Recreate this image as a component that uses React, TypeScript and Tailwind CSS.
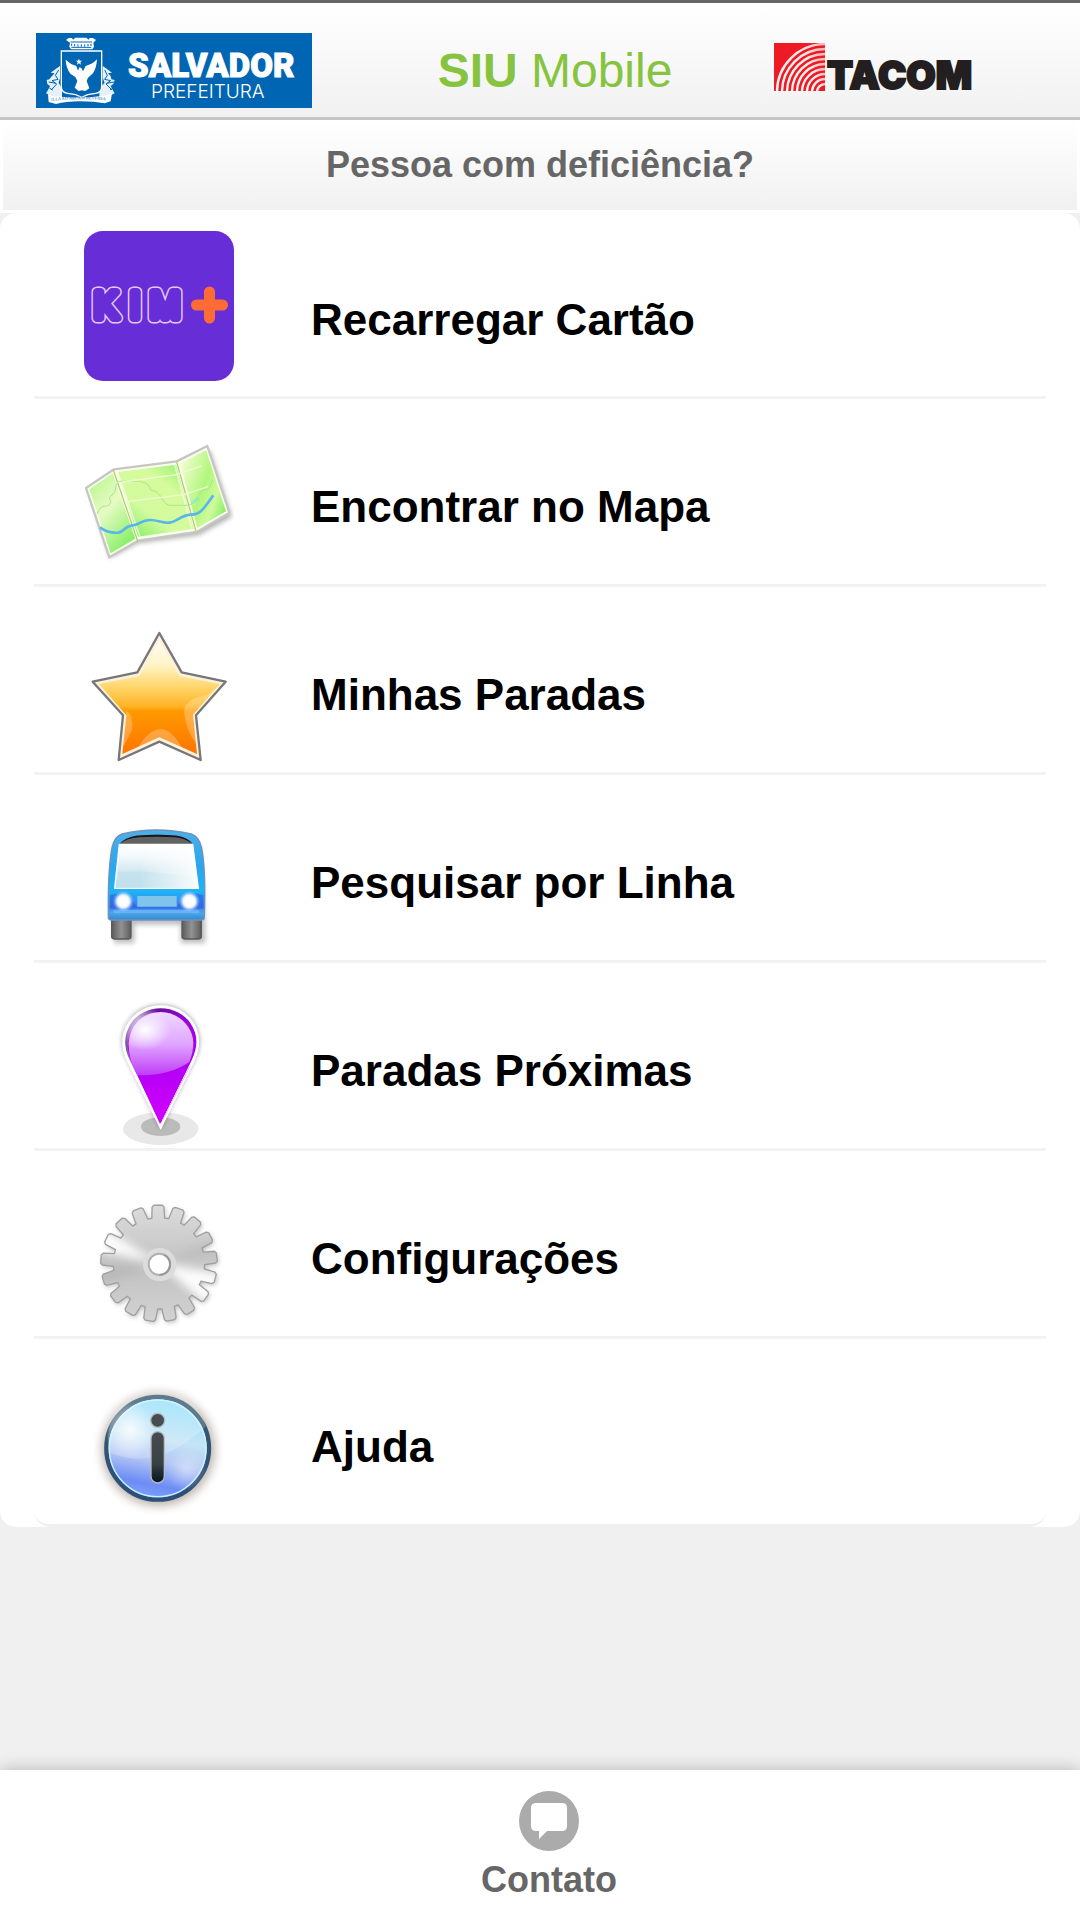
import React from "react";

const SalvadorLogo = () => (
  <svg width="276" height="75" viewBox="0 0 276 75" role="img" aria-label="Salvador Prefeitura">
    <rect width="276" height="75" fill="#0066b3" />
    <g transform="scale(0.33333) translate(-18 -39)">
      {/* mural crown */}
      <path
        d="M108 60l8-6h10l3 5 7-6h33l7 6 3-5h10l9 6-8 8 2 12-5 8H123l-5-8 2-12z"
        fill="#fff"
      />
      <path
        d="M122 66h64M125 71v7M134 72v7M144 73v7M154 73v7M164 73v7M174 72v7M183 71v7M124 82h60"
        stroke="#0066b3"
        strokeWidth="3"
        fill="none"
      />
      {/* supporters */}
      <path
        d="M90 138l-12 8-16 12 12 2-8 8-8 10-8 2 2 12 8 6-6 12-6 10 12 6 20 6h16v-26l-10-18 4-14zM218 138l12 8 16 12-12 2 8 8 2 10 10 2-4 12-8 6 6 12 6 10-12 6-16 6h-18v-26l16-18-6-14z"
        fill="#fff"
        opacity="0.9"
      />
      <path
        d="M86 150l-10 16 8 12-18 4 14 10-16 18M56 186l22 4M58 204l10 6M224 150l8 16-8 12 18 4-14 10 18 18M252 186l-22 4M250 204l-10 6"
        stroke="#0066b3"
        strokeWidth="3"
        fill="none"
      />
      {/* shield and dove */}
      <path
        d="M94 93h121v108q0 16-18 19l-24 4-18 8-18-8-24-4q-19-3-19-19z"
        fill="#0066b3"
        stroke="#fff"
        strokeWidth="4"
      />
      <path
        d="M107 119q14 14 32 19l5 14 4-10 6 2 5 10 8-16q20-5 34-20-1 24-12 42l-15 13-4 10 8 22-12 8-10-2-10 2-12-10 8-20-6-12-15-10q-13-18-14-42z"
        fill="#fff"
      />
      <path
        d="M147 116l2 6 7 0-5 5 2 7-6-4-6 4 2-7-5-5 6 0z"
        fill="#fff"
      />
      {/* ribbon */}
      <path
        d="M54 222l16 6q85 10 158-2l18-6-4 24-18 6q-32-6-74-6t-72 8l-22-6z"
        fill="#fff"
      />
      <path id="motto" d="M64 243q88-10 178-1" fill="none" />
      <text fill="#0066b3" fontSize="13" fontFamily="'Liberation Serif', serif">
        <textPath href="#motto">ILLA AD ARCAM REVERSA</textPath>
      </text>
    </g>
    <text
      x="92"
      y="44"
      fill="#fff"
      stroke="#fff"
      strokeWidth="1"
      fontSize="33"
      fontWeight="900"
      fontFamily="Roboto, sans-serif"
    >
      SALVADOR
    </text>
    <text x="115" y="65" fill="#fff" fontSize="19" fontWeight="300" fontFamily="Inter, sans-serif">
      PREFEITURA
    </text>
  </svg>
);

const TacomLogo = () => {
  const rings = [47, 42, 37, 32, 27, 22, 17, 12, 7];

  return (
    <svg
      className="overflow-visible"
      width="198"
      height="56"
      viewBox="0 0 198 56"
      role="img"
      aria-label="Tacom"
    >
      <defs>
        <linearGradient id="ringFade" x1="0" y1="1" x2="1" y2="0">
          <stop offset="0" stopColor="#fff" />
          <stop offset="0.6" stopColor="#fff" stopOpacity="0.9" />
          <stop offset="1" stopColor="#fff" stopOpacity="0.3" />
        </linearGradient>
        <clipPath id="tacomMark">
          <rect width="51" height="48" />
        </clipPath>
      </defs>
      <g clipPath="url(#tacomMark)">
        <rect width="51" height="48" fill="#ed1c24" />
        {rings.map((r) => (
          <circle
            key={r}
            cx="51"
            cy="49"
            r={r + 1}
            fill="none"
            stroke="url(#ringFade)"
            strokeWidth="2.4"
          />
        ))}
      </g>
      <text
        x="53"
        y="46"
        fill="#231f20"
        stroke="#231f20"
        strokeWidth="2"
        fontSize="38"
        fontWeight="900"
        fontFamily="Inter, sans-serif"
      >
        TACOM
      </text>
    </svg>
  );
};

const KimIcon = () => (
  <svg width="150" height="150" viewBox="0 0 150 150" aria-hidden="true">
    <rect width="150" height="150" rx="19" fill="#672dd6" />
    {/* the wide light stroke under a narrower purple one leaves a hollow outline */}
    <g fontFamily="'Liberation Sans', Arial, sans-serif" fontSize="36" strokeLinejoin="round" strokeLinecap="round">
      <text x="10 46 66" y="87" fill="#e3c8f7" stroke="#e3c8f7" strokeWidth="11">
        KIM
      </text>
      <text x="10 46 66" y="87" fill="#672dd6" stroke="#672dd6" strokeWidth="8" aria-hidden="true">
        KIM
      </text>
    </g>
    <path d="M125.500 61v26M112.500 74h26" stroke="#ff6b35" strokeWidth="11" strokeLinecap="round" />
  </svg>
);

const MapIcon = () => (
  <svg width="150" height="150" viewBox="72 42 450 450" aria-hidden="true">
    <defs>
      <linearGradient id="mapLeft" x1="0" y1="0" x2="0.6" y2="1">
        <stop offset="0" stopColor="#b5f58a" />
        <stop offset="0.5" stopColor="#e6fbc4" />
        <stop offset="1" stopColor="#8df06c" />
      </linearGradient>
      <linearGradient id="mapMid" x1="1" y1="0" x2="0.2" y2="1">
        <stop offset="0" stopColor="#86ee62" />
        <stop offset="0.35" stopColor="#d5fb9c" />
        <stop offset="0.7" stopColor="#d3fa9f" />
        <stop offset="1" stopColor="#84ef68" />
      </linearGradient>
      <linearGradient id="mapRight" x1="0" y1="0.2" x2="1" y2="0.8">
        <stop offset="0" stopColor="#f3fdd0" />
        <stop offset="0.5" stopColor="#b0f77d" />
        <stop offset="0.75" stopColor="#d0fa9c" />
        <stop offset="1" stopColor="#7fee63" />
      </linearGradient>
      <filter id="soft" x="-20%" y="-20%" width="140%" height="140%">
        <feGaussianBlur stdDeviation="8" />
      </filter>
    </defs>
    <path
      d="M88 214l80-56 190-20 92-48 66 200-100 56-184 24-82 44z"
      fill="#000"
      opacity="0.3"
      filter="url(#soft)"
    />
    <path
      d="M78 204l84-56 188-24 92-46 66 200-98 58-176 26-86 50z"
      fill="#fbfff0"
      stroke="#c6c6c2"
      strokeWidth="7"
      strokeLinejoin="round"
    />
    <path d="M88 208l70-48 68 196-74 44z" fill="url(#mapLeft)" />
    <path d="M172 156l176-22 54 192-168 24z" fill="url(#mapMid)" />
    <path d="M360 130l78-40 60 184-86 50z" fill="url(#mapRight)" />
    <path d="M160 150l74 216M350 126l58 208" stroke="#b4cf6a" strokeWidth="4" fill="none" />
    <path d="M172 154l68 196M344 134l52 192" stroke="#f8fee4" strokeWidth="5" fill="none" opacity="0.7" />
    <path
      d="M112 282q6-24 26-24t10-26l16-14q4-26 10-34h34q42-4 58 12l6 14q22 2 34 26t34 20h46l16-8 22-36 24-6 10-28"
      stroke="#aee58a"
      strokeWidth="3"
      fill="none"
    />
    <path d="M186 186l164-22 74-26M206 244l166-20 72-24" stroke="#eefcd0" strokeWidth="4" fill="none" />
    <path d="M394 250l24-16" stroke="#8fecc8" strokeWidth="7" />
    <path
      d="M120 322q20 18 56 16c18-4 18-20 42-22s24-16 52-16 34 10 58 8 36-24 66-24 40-24 66-58"
      stroke="#58b6ea"
      strokeWidth="8"
      fill="none"
    />
  </svg>
);

const starPath = "M298 69l67 118 132 28-89 101 14 134-124-55-122 55 13-134-91-101 134-28z";

const StarIcon = () => (
  <svg width="150" height="150" viewBox="72 36 450 450" aria-hidden="true">
    <defs>
      <linearGradient id="starFill" x1="0" y1="0" x2="0" y2="1">
        <stop offset="0" stopColor="#fffef6" />
        <stop offset="0.22" stopColor="#fff3c4" />
        <stop offset="0.42" stopColor="#ffd466" />
        <stop offset="0.58" stopColor="#ffb325" />
        <stop offset="0.62" stopColor="#ff9a00" />
        <stop offset="1" stopColor="#ff7400" />
      </linearGradient>
      <clipPath id="starClip">
        <path d={starPath} />
      </clipPath>
    </defs>
    <path d={starPath} fill="#fdf1dd" stroke="#777" strokeWidth="7" strokeLinejoin="round" />
    <path
      d="M298 92l60 106 122 24-81 92 12 118-113-50-111 50 12-116-82-94 122-24z"
      fill="url(#starFill)"
    />
    <g clipPath="url(#starClip)" fill="#fff">
      <path d="M372 300q10-36 68-44l44-34-84 92 12 90q-36-40-40-104z" opacity="0.25" />
      <path d="M230 420q34-60 70-62t68 60l-70-32z" opacity="0.25" />
      <path d="M198 300q24 20 18 60l-26 50z" opacity="0.25" />
    </g>
  </svg>
);

const BusIcon = () => (
  <svg width="150" height="150" viewBox="72 30 450 450" aria-hidden="true">
    <defs>
      <linearGradient id="busBody" x1="0" y1="0" x2="0" y2="1">
        <stop offset="0" stopColor="#4bb0ea" />
        <stop offset="0.4" stopColor="#2aa6ee" />
        <stop offset="0.68" stopColor="#1db4f5" />
        <stop offset="0.85" stopColor="#3f7cf0" />
        <stop offset="0.92" stopColor="#4aa6ec" />
        <stop offset="1" stopColor="#3389cf" />
      </linearGradient>
      <linearGradient id="busGlass" x1="0" y1="0" x2="0" y2="1">
        <stop offset="0" stopColor="#fff" />
        <stop offset="0.3" stopColor="#f1f8fb" />
        <stop offset="0.6" stopColor="#d5e9f2" />
        <stop offset="1" stopColor="#cbe6f1" />
      </linearGradient>
      <linearGradient id="busGlare" x1="0" y1="0" x2="1" y2="0">
        <stop offset="0.3" stopColor="#fff" stopOpacity="0" />
        <stop offset="1" stopColor="#fff" stopOpacity="0.9" />
      </linearGradient>
      <linearGradient id="tyre" x1="0" y1="0" x2="1" y2="0">
        <stop offset="0" stopColor="#5c5c5c" />
        <stop offset="0.5" stopColor="#929292" />
        <stop offset="1" stopColor="#5c5c5c" />
      </linearGradient>
      <radialGradient id="lamp">
        <stop offset="0.4" stopColor="#fff" />
        <stop offset="0.6" stopColor="#e6f2ff" />
        <stop offset="1" stopColor="#86baff" stopOpacity="0" />
      </radialGradient>
    </defs>
    <path
      d="M158 140q10-36 128-36t134 40l16 220v66h-74v-56H224v56h-62z"
      fill="#000"
      opacity="0.25"
      filter="url(#soft)"
    />
    <rect x="155" y="345" width="58" height="72" rx="8" fill="url(#tyre)" stroke="#5a5a5a" strokeWidth="4" />
    <rect x="366" y="345" width="58" height="72" rx="8" fill="url(#tyre)" stroke="#5a5a5a" strokeWidth="4" />
    <path
      d="M145 352q-2-142 11-208 6-34 30-42 102-24 208 0 24 8 31 42 13 66 8 208 0 8-8 8H153q-8 0-8-8z"
      fill="url(#busBody)"
      stroke="#6f93bd"
      strokeWidth="4"
    />
    <path d="M178 132q18-20 50-25 64-6 124 0 32 5 46 25z" fill="#626262" />
    <path d="M178 132q18-20 50-25 64-6 124 0 32 5 46 25-24-18-54-20-54-4-108 0-34 2-58 20z" fill="#171717" />
    <path d="M178 133h220l17 132H164z" fill="url(#busGlass)" stroke="#fff" strokeWidth="4" />
    <path d="M174 216q70-4 122 2t114 14l4 32H166z" fill="#b5dbea" opacity="0.5" />
    <path d="M178 133h220l17 132H164z" fill="url(#busGlare)" />
    <path d="M150 286q44-14 62 8l20 28h118l18-28q18-22 62-8v40H150z" fill="#2a56dc" opacity="0.5" />
    <rect x="232" y="288" width="118" height="32" fill="#80c4ec" />
    <rect x="160" y="330" width="258" height="10" rx="5" fill="#7cc0f8" opacity="0.6" />
    <circle cx="190" cy="304" r="32" fill="url(#lamp)" />
    <circle cx="388" cy="304" r="32" fill="url(#lamp)" />
  </svg>
);

const PinIcon = () => (
  <svg width="150" height="150" viewBox="72 54 450 450" aria-hidden="true">
    <defs>
      <linearGradient id="pinRim" x1="0" y1="0" x2="1" y2="0.2">
        <stop offset="0" stopColor="#5f1a92" />
        <stop offset="0.2" stopColor="#a785c2" />
        <stop offset="0.45" stopColor="#6a0fa0" />
        <stop offset="1" stopColor="#a400e8" />
      </linearGradient>
      <linearGradient id="pinBody" x1="0" y1="0" x2="0" y2="1">
        <stop offset="0.4" stopColor="#ac00f2" />
        <stop offset="1" stopColor="#d400ff" />
      </linearGradient>
      <linearGradient id="pinGloss" x1="0" y1="0" x2="0" y2="1">
        <stop offset="0" stopColor="#efd8ff" />
        <stop offset="0.5" stopColor="#e0a6ff" />
        <stop offset="1" stopColor="#bf3df8" />
      </linearGradient>
      <radialGradient id="pinShine">
        <stop offset="0" stopColor="#fff" />
        <stop offset="1" stopColor="#fff" stopOpacity="0" />
      </radialGradient>
    </defs>
    <ellipse cx="302" cy="446" rx="113" ry="49" fill="#e8e8e8" />
    <ellipse cx="302" cy="440" rx="59" ry="28" fill="#bbb" />
    <path
      d="M302 444L196 226C166 150 220 76 302 76s136 74 108 150z"
      fill="#000"
      opacity="0.4"
      filter="url(#soft)"
    />
    <path
      d="M302 440L204 240C166 156 222 80 302 80s138 76 98 160z"
      fill="url(#pinRim)"
      stroke="#fff"
      strokeWidth="9"
    />
    <path d="M300 432L218 254C176 164 232 96 302 96s128 66 90 150z" fill="url(#pinBody)" />
    <path d="M232 286q-28-50-26-98c6-60 46-92 96-92s96 40 98 92q0 28-12 58-60 42-156 40z" fill="url(#pinGloss)" />
    <ellipse cx="256" cy="150" rx="76" ry="60" fill="url(#pinShine)" />
    <path d="M388 262l-80 158" stroke="#efb0ff" strokeWidth="3" />
  </svg>
);

// 17 slightly tapered teeth around the hub
const gearPath = (() => {
  const teeth = 17;
  const step = 360 / teeth;
  const point = (radius: number, deg: number) => {
    const a = (deg * Math.PI) / 180;
    return `${(297 + radius * Math.cos(a)).toFixed(1)} ${(250 + radius * Math.sin(a)).toFixed(1)}`;
  };
  const points: string[] = [];
  for (let i = 0; i < teeth; i++) {
    const c = -91 + i * step;
    points.push(point(137, c - 8), point(170, c - 6), point(175, c - 4));
    points.push(point(175, c + 4), point(170, c + 6), point(137, c + 8));
  }
  return `M${points.join("L")}Z`;
})();

const GearIcon = () => (
  <svg width="150" height="150" viewBox="72 18 450 450" aria-hidden="true">
    <defs>
      <linearGradient id="gearFill" x1="0" y1="0" x2="0" y2="1">
        <stop offset="0" stopColor="#dcdcdc" />
        <stop offset="0.35" stopColor="#cacaca" />
        <stop offset="0.6" stopColor="#c4c4c4" />
        <stop offset="1" stopColor="#d2d2d2" />
      </linearGradient>
      <filter id="sheen" x="-30%" y="-30%" width="160%" height="160%">
        <feGaussianBlur stdDeviation="14" />
      </filter>
      <clipPath id="gearClip">
        <path d={gearPath} />
      </clipPath>
    </defs>
    <path d={gearPath} transform="translate(4 6)" fill="#000" opacity="0.25" filter="url(#soft)" />
    <path d={gearPath} fill="url(#gearFill)" />
    <g clipPath="url(#gearClip)">
      <g filter="url(#sheen)">
        <path d="M297 250L110 130l0 80zM297 250l190 30-40 100z" fill="#fff" opacity="0.95" />
        <path d="M297 250L110 250l10 70zM297 250l190-80v50z" fill="#a9a9a9" opacity="0.35" />
      </g>
    </g>
    <path d={gearPath} fill="none" stroke="#a0a0a0" strokeWidth="4" strokeLinejoin="round" />
    <circle cx="299" cy="254" r="50" fill="#dcdcdc" />
    <circle cx="298" cy="253" r="32" fill="#fff" stroke="#b0b0b0" strokeWidth="6" />
    <path d="M312 224a32 32 0 0 1-14 61" stroke="#989898" strokeWidth="6" fill="none" />
  </svg>
);

const InfoIcon = () => (
  <svg width="150" height="150" viewBox="252 12 450 450" aria-hidden="true">
    <defs>
      <linearGradient id="infoFill" x1="0.6" y1="0" x2="0.4" y2="1">
        <stop offset="0" stopColor="#8fe0fb" />
        <stop offset="0.4" stopColor="#c4e4f6" />
        <stop offset="0.62" stopColor="#b3c6f4" />
        <stop offset="0.85" stopColor="#6d8cf5" />
        <stop offset="1" stopColor="#7ea5fb" />
      </linearGradient>
      <linearGradient id="infoRing" x1="0" y1="0" x2="0" y2="1">
        <stop offset="0" stopColor="#365a72" />
        <stop offset="1" stopColor="#2d4f78" />
      </linearGradient>
      <linearGradient id="infoStem" x1="0" y1="0" x2="0" y2="1">
        <stop offset="0" stopColor="#464c50" />
        <stop offset="0.6" stopColor="#3a4246" />
        <stop offset="1" stopColor="#04141e" />
      </linearGradient>
      <radialGradient id="infoShine">
        <stop offset="0" stopColor="#fff" stopOpacity="0.8" />
        <stop offset="1" stopColor="#fff" stopOpacity="0" />
      </radialGradient>
      <filter id="glow" x="-20%" y="-20%" width="140%" height="140%">
        <feGaussianBlur stdDeviation="14" />
      </filter>
    </defs>
    <circle cx="475" cy="238" r="170" fill="#8a7a6c" opacity="0.55" filter="url(#glow)" />
    <circle cx="473" cy="235" r="154" fill="url(#infoFill)" stroke="url(#infoRing)" strokeWidth="13" />
    <circle cx="473" cy="235" r="145" fill="none" stroke="#c9f2ff" strokeWidth="4" />
    <path d="M329 248q140 60 288-78A145 145 0 0 0 329 248z" fill="#fff" opacity="0.2" />
    <ellipse cx="390" cy="180" rx="76" ry="86" fill="url(#infoShine)" />
    <ellipse cx="560" cy="300" rx="62" ry="62" fill="url(#infoShine)" opacity="0.5" />
    <g stroke="#b4bcc4" strokeWidth="4">
      <circle cx="473" cy="151" r="21" fill="#464c50" />
      <rect x="453" y="185" width="40" height="154" rx="20" fill="url(#infoStem)" />
    </g>
  </svg>
);

const menu = [
  { label: "Recarregar Cartão", icon: <KimIcon /> },
  { label: "Encontrar no Mapa", icon: <MapIcon /> },
  { label: "Minhas Paradas", icon: <StarIcon /> },
  { label: "Pesquisar por Linha", icon: <BusIcon /> },
  { label: "Paradas Próximas", icon: <PinIcon /> },
  { label: "Configurações", icon: <GearIcon /> },
  { label: "Ajuda", icon: <InfoIcon /> },
];

const App = () => {
  return (
    <div className="flex min-h-screen flex-col bg-[#f0f0f0] font-['Liberation_Sans',Arial,sans-serif]">
      <header className="flex h-[120px] items-center justify-between border-t-[3px] border-b-[3px] border-t-[#666] border-b-[#c5c5c5] bg-linear-to-b from-white to-[#f1f1f1] pt-[21px] pr-[108px] pl-9">
        <SalvadorLogo />
        <h1 className="ml-6 text-[48px] leading-[60px] whitespace-nowrap text-[#86c440]">
          <b>SIU</b> Mobile
        </h1>
        <TacomLogo />
      </header>

      <a
        href="#acessibilidade"
        className="border-x-[3px] border-b-[3px] border-white bg-linear-to-b from-white to-[#f1f1f1] py-6 text-center text-[36px] leading-[42px] font-bold text-[#666]"
      >
        Pessoa com deficiência?
      </a>

      <main className="flex-1">
        <ul className="rounded-2xl bg-white px-[34px]">
          {menu.map(({ label, icon }) => (
            <li
              key={label}
              className="group border-b-[3px] border-[#f2f2f2] last:rounded-b-2xl last:border-[#f0f0f0]"
            >
              <a
                href="#menu"
                className="flex items-center gap-[77px] pt-[35px] pl-[50px] group-first:pt-[18px] group-first:pb-[15px]"
              >
                {icon}
                <span className="pb-1 text-[44px] leading-[50px] font-bold text-black group-first:pt-8">
                  {label}
                </span>
              </a>
            </li>
          ))}
        </ul>
      </main>

      <footer className="flex h-[150px] justify-center bg-white pt-[21px] pl-[18px] shadow-[0_0_16px_rgba(0,0,0,0.25)]">
        <a href="#contato" className="flex flex-col items-center gap-2 text-[36px] leading-[42px] font-bold text-[#666]">
          <svg width="60" height="60" viewBox="0 0 60 60" aria-hidden="true">
            <circle cx="30" cy="30" r="30" fill="#ababab" />
            <path
              d="M17 12h26q5 0 5 5v18q0 5-5 5H28l-8 8v-8h-3q-5 0-5-5V17q0-5 5-5z"
              fill="#fff"
            />
          </svg>
          Contato
        </a>
      </footer>
    </div>
  );
};

export default App;
